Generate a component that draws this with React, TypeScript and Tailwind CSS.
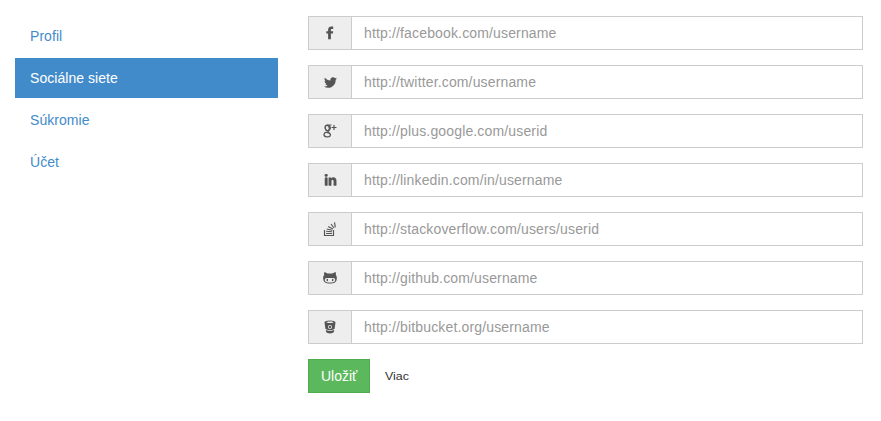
import { FaTwitter, FaLinkedinIn } from "react-icons/fa";
import { ReactNode } from "react";

function GooglePlus() {
  return (
    <svg width="14" height="14" viewBox="0 0 14 14" fill="none" stroke="currentColor">
      <ellipse cx="4.300" cy="4" rx="2.100" ry="2.800" strokeWidth="1.500" transform="rotate(-12 4.300 4)" />
      <path d="M4.200 1H8.500M6.300 1.600c1.500 1.400 1.400 3.300.1 4.300-1.500 1.200-2 1.500-.2 2.700" strokeWidth="1.100" />
      <ellipse cx="4.200" cy="10.700" rx="3.200" ry="2.200" strokeWidth="1.300" transform="rotate(8 4.200 10.700)" />
      <path d="M11 1v5M8.500 3.500h5" strokeWidth="1.200" />
    </svg>
  );
}

function StackOverflow() {
  return (
    <svg width="14" height="14" viewBox="0 0 14 14" fill="none" stroke="currentColor" strokeWidth="1.150">
      <path d="M1.500 8v5.500h9V8" />
      <path d="M3 11.500h6M3.100 9.300l5.900.5M3.700 7l5.600 1.300M5.200 4.600l4.700 2.500M8 2l3 4M11.500.4l.8 5" />
    </svg>
  );
}

function Github() {
  return (
    <svg width="14" height="14" viewBox="0 0 14 14" fill="currentColor">
      <path fillRule="evenodd" d="M1.300 1.300c1.200 0 2.300.7 3.200 1.300h5c.9-.6 2-1.300 3.200-1.300.4 1 .3 2 .1 2.700.8 1 1.200 2 1 3.800-.3 3.500-2.500 4.700-6.800 4.700S.5 11.300.2 7.800c-.2-1.800.2-2.800 1-3.800-.2-.7-.3-1.700.1-2.700ZM3.700 7C2.500 7 1.800 7.800 1.800 9c0 2.100 1.800 2.600 5.200 2.600s5.200-.5 5.200-2.600c0-1.200-.7-2-1.900-2H3.700Z" />
      <ellipse cx="4.300" cy="9" rx=".8" ry="1.200" />
      <ellipse cx="9.700" cy="9" rx=".8" ry="1.200" />
    </svg>
  );
}

function Bitbucket() {
  return (
    <svg width="14" height="14" viewBox="0 0 14 14" fill="currentColor">
      <path fillRule="evenodd" d="M7 .5c3.300 0 5.500.8 5.500 2-.2 2-.6 4-.9 6.200C10.900 9.600 9.200 10 7 10s-3.900-.4-4.600-1.300L1.500 2.500c0-1.200 2.200-2 5.500-2Zm0 1C5 1.500 3.400 1.900 3.400 2.300S5 3.100 7 3.100s3.600-.4 3.600-.8S9 1.500 7 1.500Zm0 3.500a2 2 0 1 0 0 4 2 2 0 0 0 0-4Z" />
      <circle cx="7" cy="7" r="1.200" />
      <path d="M2.700 9.900c2.100 1.100 6.500 1.100 8.600 0l-.5 2.200c-.7 1.700-6.900 1.700-7.600 0Z" />
    </svg>
  );
}

function Facebook() {
  return (
    <svg width="14" height="14" viewBox="0 0 14 14" fill="currentColor">
      <path d="M10.200.6V3H8.900c-.8 0-1 .4-1 1v1.200h2.300l-.3 2.400h-2v5.700H5.100V7.600H3.300V5.200h1.800V3.700C5.100 1.600 6.400.4 8.400.4c.8 0 1.500.1 1.800.2Z" />
    </svg>
  );
}

const rows: { icon: ReactNode; text: string }[] = [
  { icon: <Facebook />, text: "http://facebook.com/username" },
  { icon: <FaTwitter size={13} />, text: "http://twitter.com/username" },
  { icon: <GooglePlus />, text: "http://plus.google.com/userid" },
  { icon: <FaLinkedinIn size={13} className="stroke-current stroke-[20]" />, text: "http://linkedin.com/in/username" },
  { icon: <StackOverflow />, text: "http://stackoverflow.com/users/userid" },
  { icon: <Github />, text: "http://github.com/username" },
  { icon: <Bitbucket />, text: "http://bitbucket.org/username" },
];

const tabs = ["Profil", "Sociálne siete", "Súkromie", "Účet"];

export default function App() {
  return (
    <div className="flex h-[421px] w-[881px] bg-white px-[15px] pt-4 font-['Liberation_Sans',Arial,sans-serif] text-sm leading-5">
      <nav className="mr-[30px] flex w-[263px] flex-col gap-0.5">
        {tabs.map((t, i) => (
          <a key={t} className={`block px-[15px] py-2.5 tracking-[0.05px] ${i === 1 ? "bg-[#428bca] text-white" : "text-[#428bca]"}`}>{t}</a>
        ))}
      </nav>
      <main className="w-[555px]">
        {rows.map((r) => (
          <div key={r.text} className="mb-[15px] flex h-[34px] border border-[#ccc]">
            <span className="flex w-[43px] items-center justify-center border-r border-[#ccc] bg-[#eee] text-[#555]">{r.icon}</span>
            <input className="min-w-0 flex-1 px-3 tracking-[0.15px] text-[#555] outline-none placeholder:text-[#999]" placeholder={r.text} />
          </div>
        ))}
        <div className="flex items-center">
          <button className="h-[34px] border border-[#4cae4c] bg-[#5cb85c] px-3 text-white">Uložiť</button>
          <a className="ml-[15px] origin-left scale-x-[1.13] text-[11px] text-[#333]">Viac</a>
        </div>
      </main>
    </div>
  );
}
